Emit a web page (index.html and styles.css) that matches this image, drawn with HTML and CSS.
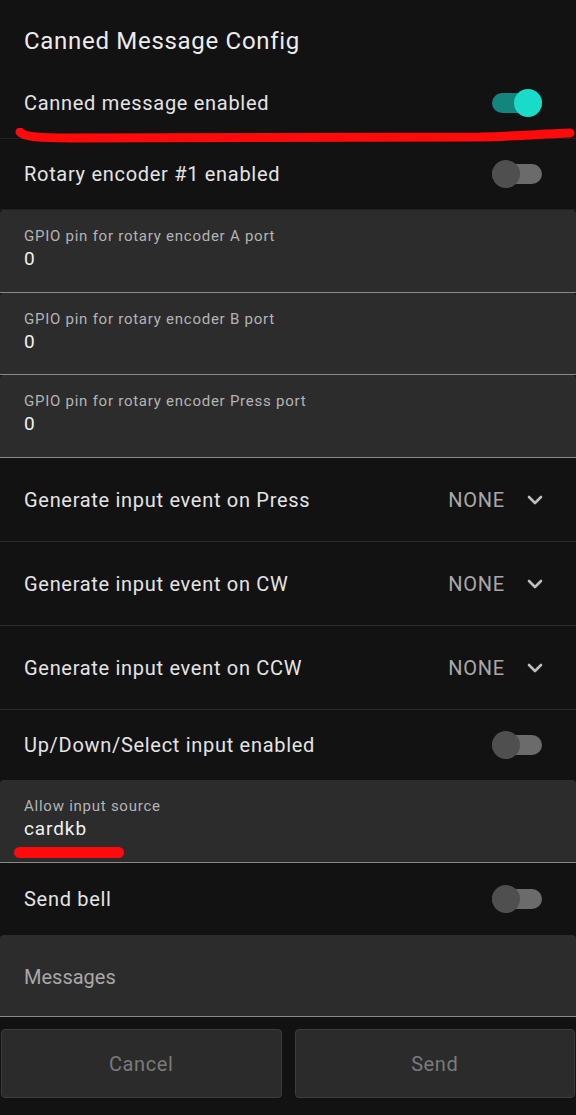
FILE: index.html
```html
<!DOCTYPE html>
<html>
<head>
<meta charset="utf-8">
<link rel="stylesheet" href="styles.css">
</head>
<body>
<div class="page">
  <h1 class="title">Canned Message Config</h1>

  <div class="row">
    <span class="row-text">Canned message enabled</span>
    <span class="switch on"><span class="thumb"></span></span>
  </div>
  <div class="row">
    <span class="row-text">Rotary encoder #1 enabled</span>
    <span class="switch"><span class="thumb"></span></span>
  </div>

  <div class="field tall">
    <div class="label">GPIO pin for rotary encoder A port</div>
    <div class="value">0</div>
  </div>
  <div class="field">
    <div class="label">GPIO pin for rotary encoder B port</div>
    <div class="value">0</div>
  </div>
  <div class="field tall">
    <div class="label">GPIO pin for rotary encoder Press port</div>
    <div class="value">0</div>
  </div>

  <div class="drop">
    <span class="row-text">Generate input event on Press</span>
    <span class="drop-val">NONE</span>
    <svg class="chev" viewBox="0 0 16 10" width="16" height="10"><path d="M2 2 L8 8 L14 2" fill="none" stroke="#bdbdbd" stroke-width="2.6" stroke-linecap="round" stroke-linejoin="round"/></svg>
  </div>
  <div class="drop">
    <span class="row-text">Generate input event on CW</span>
    <span class="drop-val">NONE</span>
    <svg class="chev" viewBox="0 0 16 10" width="16" height="10"><path d="M2 2 L8 8 L14 2" fill="none" stroke="#bdbdbd" stroke-width="2.6" stroke-linecap="round" stroke-linejoin="round"/></svg>
  </div>
  <div class="drop">
    <span class="row-text">Generate input event on CCW</span>
    <span class="drop-val">NONE</span>
    <svg class="chev" viewBox="0 0 16 10" width="16" height="10"><path d="M2 2 L8 8 L14 2" fill="none" stroke="#bdbdbd" stroke-width="2.6" stroke-linecap="round" stroke-linejoin="round"/></svg>
  </div>

  <div class="row plain">
    <span class="row-text">Up/Down/Select input enabled</span>
    <span class="switch"><span class="thumb"></span></span>
  </div>

  <div class="field tall">
    <div class="label">Allow input source</div>
    <div class="value">cardkb</div>
    <span class="mark-short"></span>
  </div>

  <div class="row plain bell">
    <span class="row-text">Send bell</span>
    <span class="switch"><span class="thumb"></span></span>
  </div>

  <div class="field messages">
    <div class="placeholder">Messages</div>
  </div>

  <div class="buttons">
    <button class="btn">Cancel</button>
    <button class="btn">Send</button>
  </div>

  <svg class="mark-long" width="576" height="20" viewBox="0 0 576 20">
    <path d="M20 4 C 24 9, 40 10, 70 10 L 480 9 C 520 8, 540 6, 570 5" fill="none" stroke="#ff0a0a" stroke-width="9" stroke-linecap="round"/>
  </svg>
</div>
</body>
</html>
```
FILE: styles.css
```css
* { box-sizing: border-box; }
html, body { margin: 0; padding: 0; background: #121212; }
body {
  font-family: Roboto, "Noto Sans", "Liberation Sans", sans-serif;
  color: #e6e6e6;
  width: 576px;
  height: 1115px;
  overflow: hidden;
}
.page { position: relative; }
.title {
  margin: 0;
  padding: 26px 24px 12px;
  font-size: 24px;
  line-height: 30px;
  font-weight: 400;
  letter-spacing: 0.7px;
  color: #ececec;
}
.row {
  display: flex;
  align-items: center;
  justify-content: space-between;
  height: 71px;
  padding: 0 34px 0 24px;
  border-bottom: 1px solid #222;
}
.row.plain { border-bottom: none; height: 70px; }
.row.bell { height: 72px; }
.row-text { font-size: 20px; letter-spacing: 0.7px; color: #e4e4e4; }
.switch {
  position: relative;
  width: 50px;
  height: 20px;
  border-radius: 10px;
  background: #6b6b6b;
}
.switch .thumb {
  position: absolute;
  top: -4px;
  left: 0;
  width: 28px;
  height: 28px;
  border-radius: 50%;
  background: #4f4f4f;
}
.switch.on { background: #12857c; }
.switch.on .thumb { left: 22px; background: #18dcc8; }

.field {
  position: relative;
  background: #2c2c2c;
  border-radius: 4px 4px 0 0;
  border-bottom: 1px solid #8a8a8a;
  height: 82px;
  padding: 17px 24px 0;
}
.field.tall { height: 83px; }
.label { font-size: 15px; line-height: 18px; letter-spacing: 0.75px; color: #b4b4b4; }
.value { font-size: 19px; line-height: 24px; letter-spacing: 0.9px; color: #f0f0f0; margin-top: 2px; }
.messages { display: flex; align-items: center; padding-top: 3px; }
.placeholder { font-size: 20px; letter-spacing: 0; color: #a8a8a8; }

.drop {
  display: flex;
  align-items: center;
  height: 84px;
  padding: 0 33px 0 24px;
  border-bottom: 1px solid #2a2a2a;
}
.drop .row-text { flex: 1; }
.drop-val { font-size: 20px; letter-spacing: 0.8px; color: #a9a9a9; margin-right: 22px; }
.chev { display: block; }

.mark-short {
  position: absolute;
  left: 14px;
  top: 67px;
  width: 110px;
  height: 11px;
  border-radius: 6px;
  background: #ff0a0a;
}
.mark-long { position: absolute; left: 0; top: 128px; }

.buttons {
  display: flex;
  gap: 13px;
  padding: 12px 1px 0;
}
.btn {
  flex: 1;
  height: 69px;
  background: #2b2b2b;
  border: 1px solid #3c3c3c;
  border-radius: 4px;
  font-family: inherit;
  font-size: 20px;
  letter-spacing: 0.6px;
  color: #7a7a7a;
}
```
